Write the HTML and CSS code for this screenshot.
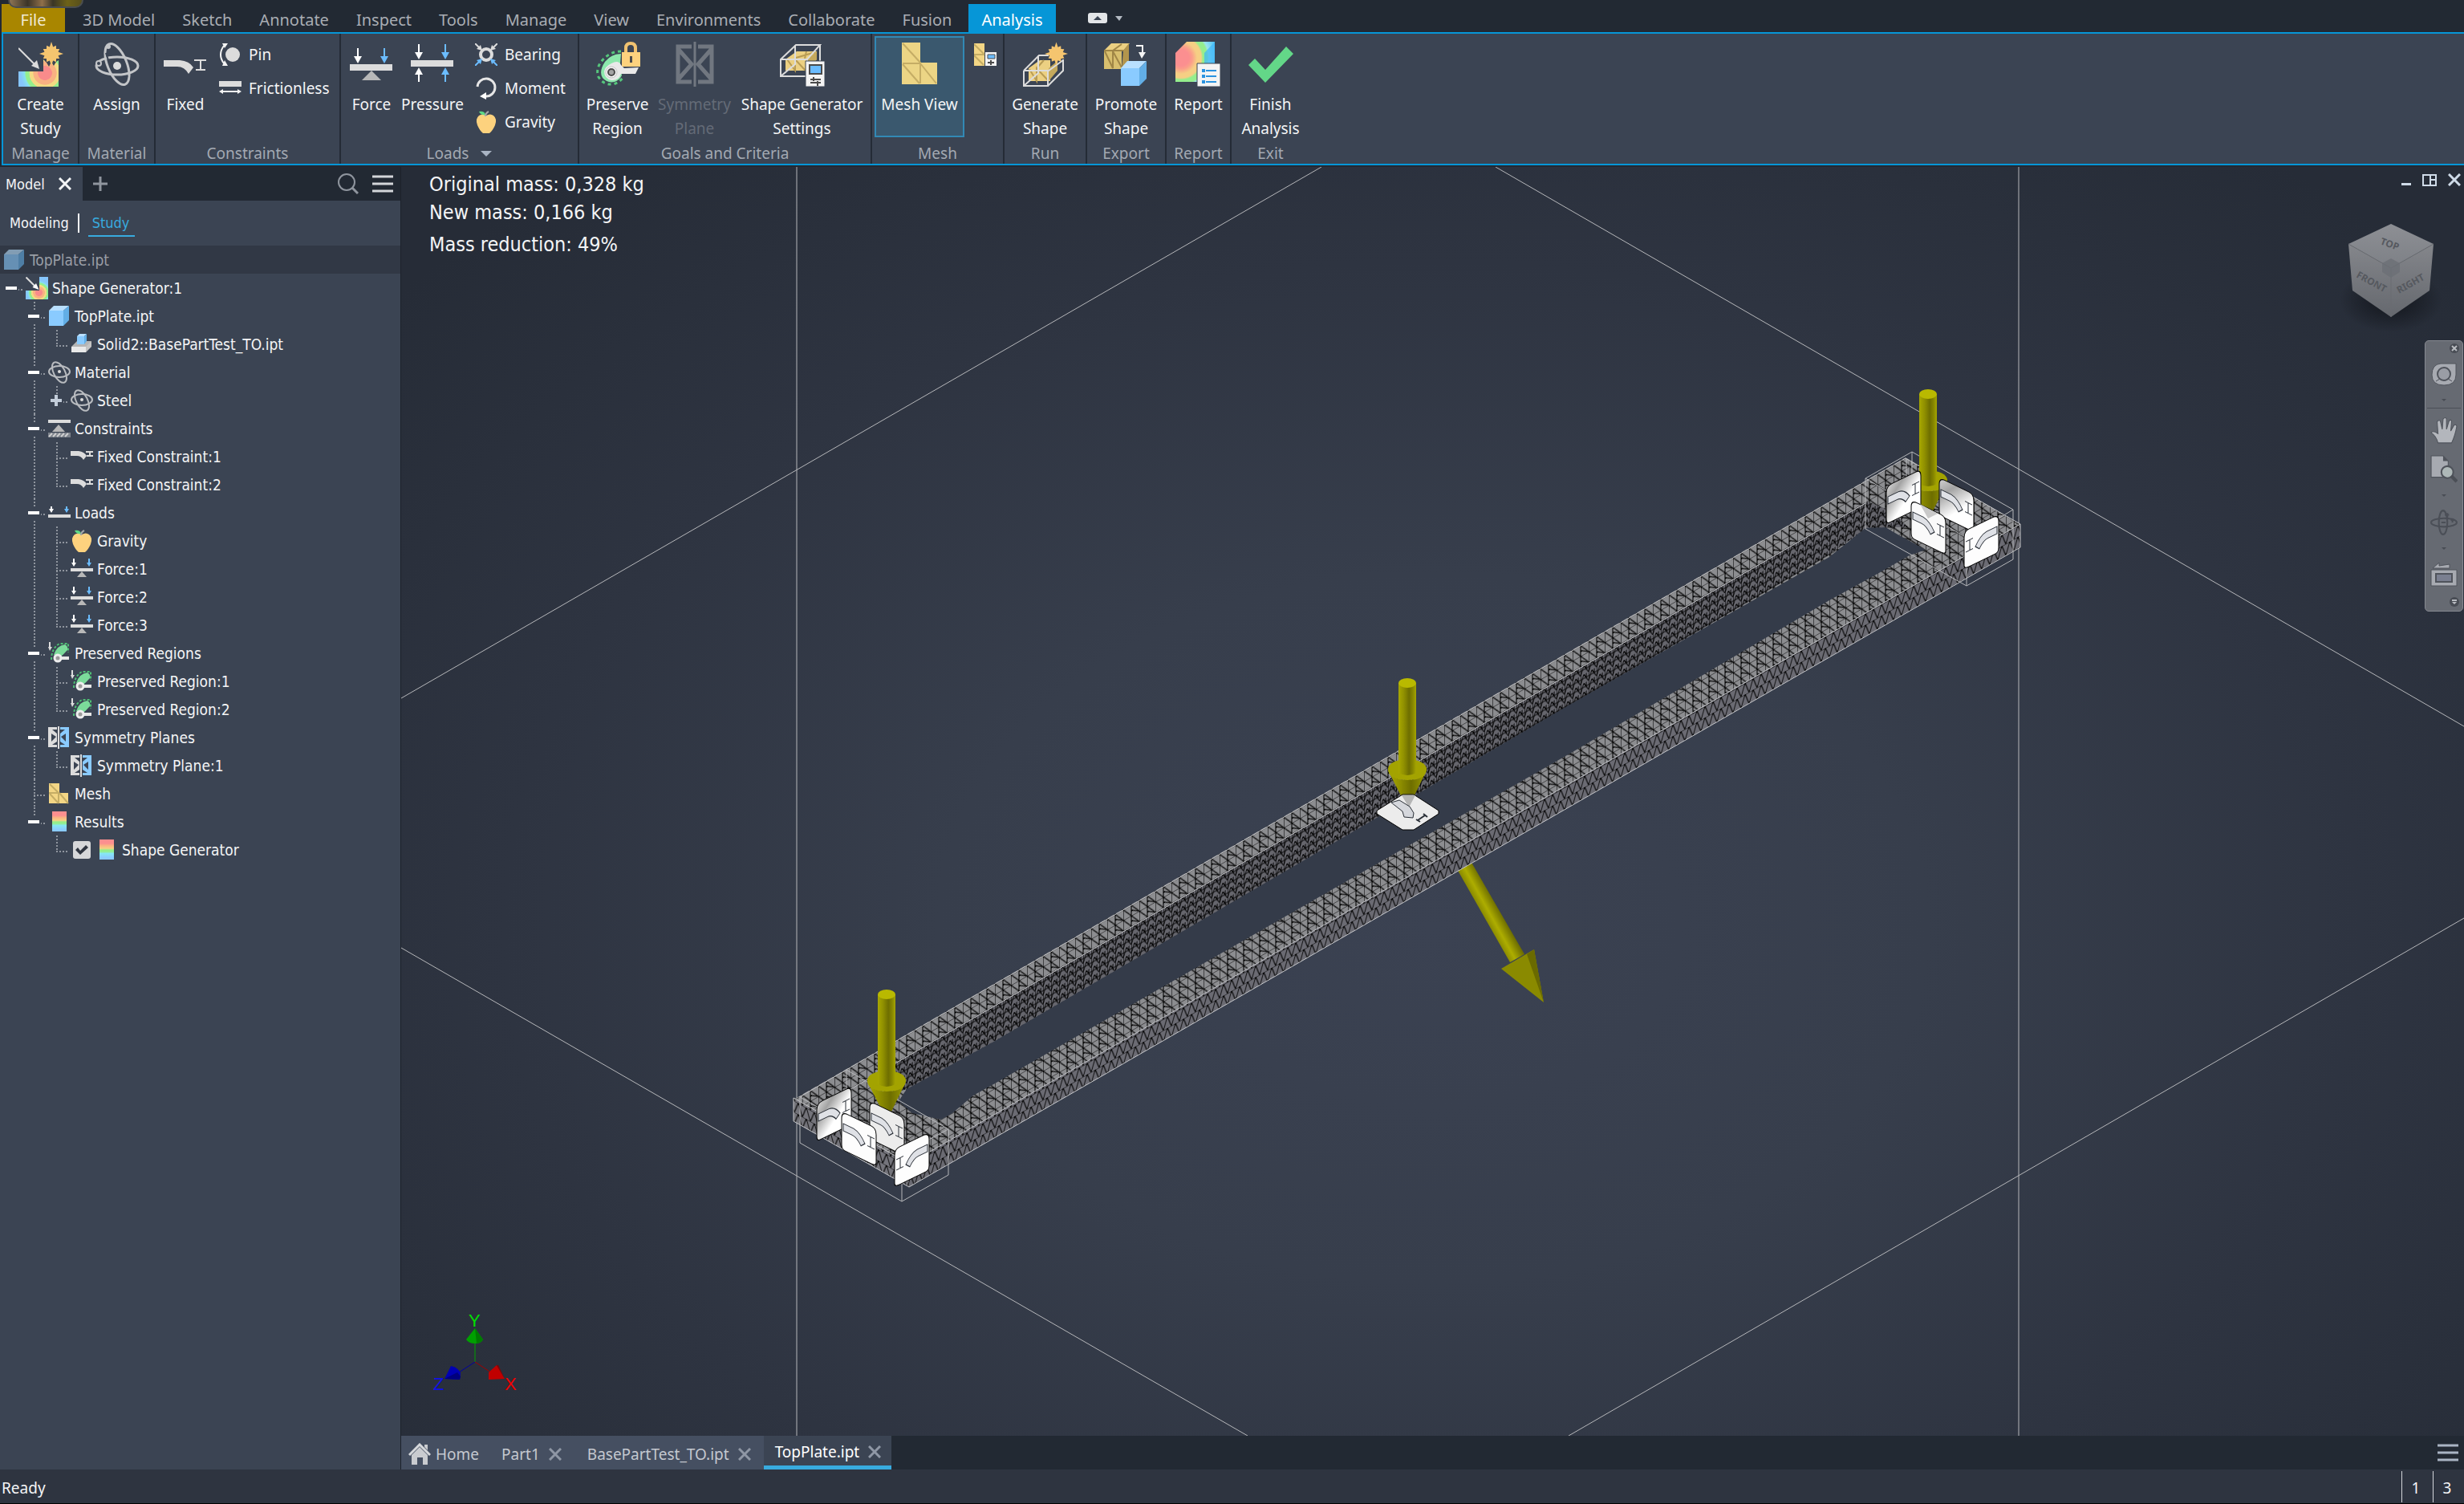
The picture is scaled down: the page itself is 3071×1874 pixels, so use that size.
FILE: index.html
```html
<!DOCTYPE html>
<html lang="en">
<head>
    <meta charset="UTF-8">
    <meta name="viewport" content="width=device-width, initial-scale=1.0">
    <title>TopPlate.ipt - Shape Generator</title>
    <link rel="stylesheet" href="styles.css">
</head>
<body>
    <!-- Icon sprite -->
    <svg class="sprite" aria-hidden="true">
        <defs>
            <radialGradient id="heat" gradientUnits="userSpaceOnUse" cx="33" cy="39" r="34">
                <stop offset="0.25" stop-color="#f98b8b"/>
                <stop offset="0.27" stop-color="#f9b182"/>
                <stop offset="0.42" stop-color="#f9b182"/>
                <stop offset="0.44" stop-color="#f3da83"/>
                <stop offset="0.56" stop-color="#f3da83"/>
                <stop offset="0.58" stop-color="#95ee8d"/>
                <stop offset="0.7" stop-color="#95ee8d"/>
                <stop offset="0.74" stop-color="#86e0ee"/>
                <stop offset="0.9" stop-color="#86c5fb"/>
            </radialGradient>
            <radialGradient id="heatReport" gradientUnits="userSpaceOnUse" cx="7" cy="20" r="50">
                <stop offset="0.2" stop-color="#fb8f90"/>
                <stop offset="0.28" stop-color="#fb9f8a"/>
                <stop offset="0.4" stop-color="#f6cf84"/>
                <stop offset="0.5" stop-color="#f6cf84"/>
                <stop offset="0.55" stop-color="#95ee8d"/>
                <stop offset="0.65" stop-color="#95ee8d"/>
                <stop offset="0.7" stop-color="#9be4ee"/>
                <stop offset="0.95" stop-color="#45bdf8"/>
            </radialGradient>
            <linearGradient id="rainbow" x1="0" y1="0" x2="0" y2="1">
                <stop offset="0.2" stop-color="#fc8f8f"/>
                <stop offset="0.3" stop-color="#fab183"/>
                <stop offset="0.45" stop-color="#f6d183"/>
                <stop offset="0.52" stop-color="#94ee8c"/>
                <stop offset="0.6" stop-color="#94ee8c"/>
                <stop offset="0.7" stop-color="#86e7f4"/>
                <stop offset="0.9" stop-color="#8acbff"/>
            </linearGradient>
        </defs>
        <symbol id="i-star" viewBox="-14 -14 28 28">
            <path fill="#f5c56f" d="M0-14 2-8 5.500-9.500 5.700-5.700 9.500-5.500 8-2 14 0 8 2 9.500 5.500 5.700 5.700 5.500 9.500 2 8 0 14-2 8-5.500 9.500-5.700 5.700-9.500 5.500-8 2-14 0-8-2-9.500-5.500-5.700-5.700-5.500-9.500-2-8z"/>
        </symbol>
        <symbol id="i-create" viewBox="0 0 56 56">
            <path fill="url(#heat)" d="M0 37h31V22l4 4 3 5 3-6 3 5 3-5 3-2v33H0z"/>
            <path stroke="#dcdcdc" stroke-width="2" d="M0 8l21 21"/>
            <path fill="#dcdcdc" d="M26 34l-10-4 7-7z"/>
            <use href="#i-star" x="26" y="0" width="30" height="30"/>
        </symbol>
        <symbol id="i-atom" viewBox="0 0 56 56">
            <g fill="none" stroke="#c3c5c8" stroke-width="3">
                <ellipse cx="28" cy="30" rx="26" ry="11"/>
                <ellipse cx="28" cy="28" rx="12" ry="27" transform="rotate(-22 28 28)"/>
            </g>
            <path stroke="#3b4453" stroke-width="2" d="M14 14q2 8 6 14M33 47q6-1 8-4" fill="none"/>
            <circle cx="28" cy="30" r="5" fill="#dcdcdc"/>
            <circle cx="5" cy="27" r="3" fill="#3b4453" stroke="#c3c5c8" stroke-width="2"/>
            <circle cx="17" cy="6" r="3" fill="#c3c5c8"/>
        </symbol>
        <symbol id="i-atom-small" viewBox="0 0 28 28">
            <g fill="none" stroke="#b9bcc0" stroke-width="2">
                <ellipse cx="14" cy="13" rx="13" ry="7"/>
                <ellipse cx="14" cy="14" rx="7" ry="14" transform="rotate(-28 14 14)"/>
            </g>
            <circle cx="14" cy="13" r="2" fill="#dcdcdc"/>
        </symbol>
        <symbol id="i-fixed" viewBox="0 0 56 56">
            <path fill="#dcdcdc" d="M1 23h20q12 1 17 9l-6 8q-5-9-14-9H1z"/>
            <path fill="none" stroke="#dcdcdc" stroke-width="2" d="M39 23h15M47 23v12M41 35h12"/>
        </symbol>
        <symbol id="i-fixed-small" viewBox="0 0 28 28">
            <path fill="#dcdcdc" d="M0 7h10q7 1 10 6l-4 5q-3-5-8-5H0z"/>
            <path fill="none" stroke="#dcdcdc" stroke-width="2" d="M19 8h9M24 8v5M20 13h8"/>
        </symbol>
        <symbol id="i-pin" viewBox="0 0 28 28">
            <circle cx="17" cy="14" r="9" fill="#dcdcdc"/>
            <path fill="none" stroke="#f4f4f4" stroke-width="2" d="M6 3q-8 11 0 22"/>
            <path fill="#f4f4f4" d="M4 0h7L7 6zM4 28h7l-4-7z"/>
        </symbol>
        <symbol id="i-frictionless" viewBox="0 0 28 28">
            <path fill="#dcdcdc" d="M0 5h28v7H0z"/>
            <path stroke="#f4f4f4" stroke-width="2" d="M3 18h22"/>
            <path fill="#f4f4f4" d="M0 18l5-3v6zM28 18l-5-3v6z"/>
        </symbol>
        <symbol id="i-force" viewBox="0 0 56 56">
            <path fill="#dcdcdc" d="M1 28h53v8H1z"/>
            <path fill="#b8b8b8" d="M28 36l12 12H16z"/>
            <path stroke="#fff" stroke-width="2" d="M11 8v12"/>
            <path fill="#fff" d="M6 18h10l-5 9z"/>
            <path stroke="#6bbcff" stroke-width="2" d="M44 8v12"/>
            <path fill="#6bbcff" d="M39 18h10l-5 9z"/>
        </symbol>
        <symbol id="i-force-small" viewBox="0 0 28 28">
            <path fill="#dcdcdc" d="M0 13h28v4H0z"/>
            <path fill="#b8b8b8" d="M14 17l6 7H8z"/>
            <path fill="#fff" d="M3 1h2v5h2l-3 5-3-5h2z"/>
            <path fill="#6bbcff" d="M22 1h2v5h2l-3 5-3-5h2z"/>
        </symbol>
        <symbol id="i-loads" viewBox="0 0 28 28">
            <path fill="#dcdcdc" d="M0 16h28v4H0z"/>
            <path fill="#fff" d="M3 6h2v3h2l-3 5-3-5h2z"/>
            <path fill="#6bbcff" d="M22 6h2v3h2l-3 5-3-5h2z"/>
        </symbol>
        <symbol id="i-pressure" viewBox="0 0 56 56">
            <path fill="#dcdcdc" d="M1 23h53v8H1z"/>
            <path stroke="#fff" stroke-width="2" d="M11 3v12M11 39v11"/>
            <path fill="#fff" d="M6 13h10l-5 9zM6 41h10l-5-9z"/>
            <path stroke="#6bbcff" stroke-width="2" d="M44 3v12M44 39v11"/>
            <path fill="#6bbcff" d="M39 13h10l-5 9zM39 41h10l-5-9z"/>
        </symbol>
        <symbol id="i-bearing" viewBox="0 0 28 28">
            <circle cx="14" cy="14" r="7" fill="none" stroke="#dcdcdc" stroke-width="4"/>
            <path stroke="#dcdcdc" stroke-width="2" d="M0 0l5 5M28 0l-5 5"/>
            <path fill="#dcdcdc" d="M9 9l-7-2 5-5zM19 9l7-2-5-5z"/>
            <path stroke="#6bbcff" stroke-width="2" d="M0 28l5-5M28 28l-5-5"/>
            <path fill="#6bbcff" d="M9 19l-7 2 5 5zM19 19l7 2-5 5z"/>
        </symbol>
        <symbol id="i-moment" viewBox="0 0 28 28">
            <path fill="none" stroke="#e6e6e6" stroke-width="3" d="M3 12A11 11 0 1 1 14 24"/>
            <path fill="#fff" d="M6 24l8-5v9z"/>
        </symbol>
        <symbol id="i-apple" viewBox="0 0 28 28">
            <path fill="#fdd27e" d="M14 6q5-3 9 0 5 4 2 12-3 7-7 10h-8q-4-3-7-10-3-8 2-12 4-3 9 0z"/>
            <path fill="#5fd886" d="M5 1q7-1 8 4-6 1-8-4z"/>
            <path fill="none" stroke="#a5a7aa" stroke-width="2" d="M13 7q0-4 4-6"/>
        </symbol>
        <symbol id="i-preserve" viewBox="0 0 56 56">
            <path fill="none" stroke="#55c77c" stroke-width="3" stroke-dasharray="4 4" d="M32 12Q18 12 8 24 0 34 4 44q6 10 18 9 8-2 13-9"/>
            <path fill="#8ce8ac" d="M32 15q-12 0-20 10-8 12-3 20 6 7 15 5 6-2 9-8l-2-15z"/>
            <path fill="#e9e9e9" d="M20 27q9-5 12 2l4 4 18-1-4 8H32q-3 9-12 8-9-2-9-11 1-6 9-10z"/>
            <circle cx="20" cy="38" r="7" fill="#f4f4f4" stroke="#c4c4c4"/>
            <circle cx="20" cy="38" r="4" fill="#a3a3a3" stroke="#4b4b4b" stroke-width="2"/>
            <path fill="none" stroke="#f1c270" stroke-width="4" d="M38 14V8q0-6 6-6t6 6v6"/>
            <path fill="#fdd27e" d="M33 13h23v18H33z"/>
            <path fill="#4b4b4b" d="M43 18h3v8h-3z"/>
        </symbol>
        <symbol id="i-preserved" viewBox="0 0 28 28">
            <path fill="#7bdb9a" d="M7 16q4-12 14-13 4 2 3 7-5 6-11 10z"/>
            <path fill="none" stroke="#4fbf75" stroke-width="2" stroke-dasharray="3 2" d="M4 22Q4 8 14 2h11v11"/>
            <path fill="#e6e6e6" d="M12 18h14v4H12z"/>
            <circle cx="12" cy="20" r="4" fill="#9a9a9a" stroke="#eee" stroke-width="3"/>
            <path fill="#dcdcdc" d="M1 0h2v6h2l-3 5-2-5h1z"/>
        </symbol>
        <symbol id="i-symmetry-off" viewBox="0 0 56 56">
            <g fill="none" stroke="#717780" stroke-width="5">
                <path d="M24 6H7v44h17M8 10l16 18L8 46M32 6h17v44H32M48 10L32 28l16 18"/>
            </g>
            <path stroke="#717780" stroke-width="3" d="M28 0v56"/>
        </symbol>
        <symbol id="i-symmetry" viewBox="0 0 28 28">
            <path fill="#dcdcdc" d="M0 1h11v25H0z"/>
            <path fill="#8acbff" d="M15 1h11v25H15z"/>
            <path fill="#3b4453" d="M4 9l6 4-6 6zM5 4h6v5zM5 23h6v-4zM22 9l-6 4 6 6zM21 4h-6v5zM21 23h-6v-4z"/>
            <path stroke="#3b4453" stroke-width="4" d="M13 0v28"/>
            <path stroke="#dcdcdc" stroke-width="2" d="M13 0v28"/>
        </symbol>
        <symbol id="i-settings" viewBox="0 0 56 56">
            <path fill="#ecd082" d="M7 22l14-10h25v10L32 36H7z"/>
            <path fill="#c5a95c" d="M33 22l13-10v10L33 36z"/>
            <path fill="none" stroke="#b89c55" stroke-width="2" d="M9 22l10 14V22l13 14M20 20l24-7M33 12l-2 9"/>
            <path fill="none" stroke="#dcdcdc" stroke-width="2" d="M1 22L20 4h30L34 22zM1 22v21h33V22M1 43l18-15V4M50 4v20"/>
            <path fill="#f4f4f4" stroke="#3b4453" d="M32 24h24v32H32z"/>
            <path fill="#6bbcff" stroke="#4b4b4b" stroke-width="2" d="M37 29h15v11H37z"/>
            <path stroke="#4b4b4b" stroke-width="2" d="M38 47h13M38 51h13M42 44v5M47 49v6"/>
        </symbol>
        <symbol id="i-mesh" viewBox="0 0 56 56">
            <path fill="#ecd585" d="M6 1h23v25h21v27H6z"/>
            <path fill="none" stroke="#c5ad65" stroke-width="2" d="M7 2l22 24v26M7 27h22M7 28l21 24M29 27l20 25"/>
        </symbol>
        <symbol id="i-mesh-small" viewBox="0 0 28 28">
            <path fill="#f3d685" d="M1 1h13v12h11v13H1z"/>
            <path fill="none" stroke="#c5ad65" stroke-width="2" d="M2 2l11 11v13M1 13h12M2 14l11 12M14 13l11 13"/>
        </symbol>
        <symbol id="i-mesh-settings" viewBox="0 0 28 28">
            <path fill="#f3d685" d="M0 0h13v28H0z"/>
            <path fill="none" stroke="#c5ad65" stroke-width="2" d="M0 1l13 13M0 14h13M0 15l12 12"/>
            <path fill="#f4f4f4" d="M14 11h14v17H14z"/>
            <path fill="#6bbcff" stroke="#4b4b4b" d="M17 14h9v5h-9z"/>
            <path stroke="#4b4b4b" stroke-width="2" d="M17 24h8M21 21v6"/>
        </symbol>
        <symbol id="i-generate" viewBox="0 0 56 56">
            <path fill="#ecd082" d="M7 33l14-10h13v26H7z"/>
            <path fill="#c5a95c" d="M32 33l11-9v12L32 49z"/>
            <path fill="none" stroke="#b89c55" stroke-width="2" d="M8 34l9 15V33l14 15M18 32l8-9"/>
            <path fill="none" stroke="#dcdcdc" stroke-width="2" d="M1 36l19-19h12M1 36h31l18-13M1 36v19h30V36M31 55l19-19V22M1 55l18-16V17"/>
            <use href="#i-star" x="27" y="0" width="29" height="30"/>
        </symbol>
        <symbol id="i-promote" viewBox="0 0 56 56">
            <path fill="#d8bf6e" d="M1 11h22v23H1z"/>
            <path fill="#ecd082" d="M1 11l9-9h23l-8 9z"/>
            <path fill="#b3954c" d="M25 11l7-9v22l-9 10z"/>
            <path fill="none" stroke="#a08646" stroke-width="2" d="M2 12l10 21V12l11 20M1 11h24M12 11l11-8"/>
            <path fill="#8acbff" d="M22 33h23v22H22z"/>
            <path fill="#b9e0ff" d="M22 33l8-9h24l-9 9z"/>
            <path fill="#62aee6" d="M45 33l9-9v22l-9 9z"/>
            <path fill="none" stroke="#f4f4f4" stroke-width="2" d="M41 5h8v10"/>
            <path fill="#f4f4f4" d="M44 13h9l-5 8z"/>
        </symbol>
        <symbol id="i-report" viewBox="0 0 56 56">
            <path fill="url(#heatReport)" d="M0 14L14 0h35v36L36 50H0z"/>
            <path fill="#3fb6fa" d="M36 14L49 0v36L36 50z" opacity=".7"/>
            <path fill="#f4f4f4" stroke="#3b4453" d="M27 27h29v29H27z"/>
            <path stroke="#2a93e0" stroke-width="2" d="M38 36h13M38 43h13M38 50h13"/>
            <path fill="#2a93e0" d="M33 34h4v4h-4zM33 41h4v4h-4zM33 48h4v4h-4z"/>
        </symbol>
        <symbol id="i-finish" viewBox="0 0 56 56">
            <path fill="#63d788" d="M0 29l8-8 13 14L47 6l9 9-35 36z"/>
        </symbol>
        <symbol id="i-cube" viewBox="0 0 28 28">
            <path fill="#8acbff" d="M1 7h18v19H1z"/>
            <path fill="#b9e0ff" d="M1 7l6-6h19l-7 6z"/>
            <path fill="#62aee6" d="M19 7l7-6v18l-7 7z"/>
        </symbol>
        <symbol id="i-solid" viewBox="0 0 28 28">
            <path fill="#b5b5b5" d="M1 17l7-7h18l-7 14z"/>
            <path fill="#e9e9e9" d="M1 17h18v7H1z"/>
            <path fill="#c4c4c4" d="M19 17l7-7v7l-7 7z"/>
            <path fill="#8acbff" d="M8 4h9v10H8z"/>
            <path fill="#b9e0ff" d="M8 4l3-3h9l-3 3z"/>
            <path fill="#62aee6" d="M17 4l3-3v9l-3 4z"/>
        </symbol>
        <symbol id="i-constraints" viewBox="0 0 28 28">
            <path fill="#dcdcdc" d="M0 3h28v4H0z"/>
            <path fill="#b8b8b8" d="M13 9l8 9H5z"/>
            <path fill="#7d838c" d="M0 19h28v6H0z"/>
            <path stroke="#cfcfcf" stroke-width="2" d="M1 24l4-4M6 24l4-4M11 24l4-4M16 24l4-4M21 24l4-4"/>
        </symbol>
        <symbol id="i-results" viewBox="0 0 28 28">
            <path fill="url(#rainbow)" d="M5 1h18v25H5z"/>
        </symbol>
        <symbol id="i-shape" viewBox="0 0 56 56">
            <path fill="url(#heat)" d="M0 34h34V0h22v56H0z"/>
            <path stroke="#dcdcdc" stroke-width="4" d="M1 1l24 24"/>
            <path fill="#fff" d="M33 32l-16-6 9-10z"/>
        </symbol>
        <symbol id="i-close" viewBox="0 0 16 16">
            <path fill="none" stroke="currentColor" stroke-width="3" d="M1 1l14 14M15 1L1 15"/>
        </symbol>
        <symbol id="i-menu" viewBox="0 0 26 22">
            <path stroke="currentColor" stroke-width="3" d="M0 2h26M0 11h26M0 20h26"/>
        </symbol>
    </svg>

    <header class="ribbon">
        <div class="camera-thumb"></div>
        <nav class="ribbon-tabs">
            <button class="tab file">File</button>
            <button class="tab">3D Model</button>
            <button class="tab">Sketch</button>
            <button class="tab">Annotate</button>
            <button class="tab">Inspect</button>
            <button class="tab">Tools</button>
            <button class="tab">Manage</button>
            <button class="tab">View</button>
            <button class="tab">Environments</button>
            <button class="tab">Collaborate</button>
            <button class="tab">Fusion</button>
            <button class="tab active">Analysis</button>
            <button class="tab-options" aria-label="Ribbon options">
                <svg width="44" height="14" viewBox="0 0 44 14">
                    <rect width="24" height="13" rx="3" fill="#e3e5e8"/>
                    <path fill="#3b4453" d="M12 4l5 5H7z"/>
                    <path fill="#b4bac3" d="M34 4h9l-4 6z"/>
                </svg>
            </button>
        </nav>

        <div class="ribbon-groups">
            <section class="group manage">
                <div class="tools">
                    <button class="tool"><svg class="icon"><use href="#i-create"/></svg><span>Create<br>Study</span></button>
                </div>
                <h2>Manage</h2>
            </section>
            <section class="group material">
                <div class="tools">
                    <button class="tool"><svg class="icon"><use href="#i-atom"/></svg><span>Assign</span></button>
                </div>
                <h2>Material</h2>
            </section>
            <section class="group constraints">
                <div class="tools">
                    <button class="tool fixed"><svg class="icon"><use href="#i-fixed"/></svg><span>Fixed</span></button>
                    <div class="stack">
                        <button><svg class="icon-small"><use href="#i-pin"/></svg>Pin</button>
                        <button><svg class="icon-small"><use href="#i-frictionless"/></svg>Frictionless</button>
                    </div>
                </div>
                <h2>Constraints</h2>
            </section>
            <section class="group loads">
                <div class="tools">
                    <button class="tool force"><svg class="icon"><use href="#i-force"/></svg><span>Force</span></button>
                    <button class="tool pressure"><svg class="icon"><use href="#i-pressure"/></svg><span>Pressure</span></button>
                    <div class="stack">
                        <button><svg class="icon-small"><use href="#i-bearing"/></svg>Bearing</button>
                        <button><svg class="icon-small"><use href="#i-moment"/></svg>Moment</button>
                        <button><svg class="icon-small"><use href="#i-apple"/></svg>Gravity</button>
                    </div>
                </div>
                <h2>Loads <span class="caret"></span></h2>
            </section>
            <section class="group goals">
                <div class="tools">
                    <button class="tool preserve"><svg class="icon"><use href="#i-preserve"/></svg><span>Preserve<br>Region</span></button>
                    <button class="tool symmetry" disabled><svg class="icon"><use href="#i-symmetry-off"/></svg><span>Symmetry<br>Plane</span></button>
                    <button class="tool settings"><svg class="icon"><use href="#i-settings"/></svg><span>Shape Generator<br>Settings</span></button>
                </div>
                <h2>Goals and Criteria</h2>
            </section>
            <section class="group mesh">
                <div class="tools">
                    <button class="tool selected"><svg class="icon"><use href="#i-mesh"/></svg><span>Mesh View</span></button>
                    <div class="stack">
                        <button aria-label="Mesh settings"><svg class="icon-small"><use href="#i-mesh-settings"/></svg></button>
                    </div>
                </div>
                <h2>Mesh</h2>
            </section>
            <section class="group run">
                <div class="tools">
                    <button class="tool"><svg class="icon"><use href="#i-generate"/></svg><span>Generate<br>Shape</span></button>
                </div>
                <h2>Run</h2>
            </section>
            <section class="group export">
                <div class="tools">
                    <button class="tool"><svg class="icon"><use href="#i-promote"/></svg><span>Promote<br>Shape</span></button>
                </div>
                <h2>Export</h2>
            </section>
            <section class="group report">
                <div class="tools">
                    <button class="tool"><svg class="icon"><use href="#i-report"/></svg><span>Report</span></button>
                </div>
                <h2>Report</h2>
            </section>
            <section class="group exit">
                <div class="tools">
                    <button class="tool"><svg class="icon"><use href="#i-finish"/></svg><span>Finish<br>Analysis</span></button>
                </div>
                <h2>Exit</h2>
            </section>
        </div>
    </header>

    <div class="workspace">
        <aside class="browser">
            <div class="browser-tabs">
                <button class="browser-tab">Model <svg class="x"><use href="#i-close"/></svg></button>
                <button class="add" aria-label="Add panel"><svg width="18" height="18" viewBox="0 0 18 18"><path stroke="#8f959e" stroke-width="3" d="M9 0v18M0 9h18"/></svg></button>
                <button class="search" aria-label="Search"><svg width="26" height="26" viewBox="0 0 26 26"><circle cx="11" cy="11" r="10" fill="none" stroke="#8f959e" stroke-width="2"/><path stroke="#8f959e" stroke-width="3" d="M18 18l7 7"/></svg></button>
                <button class="menu" aria-label="Menu"><svg width="26" height="22"><use href="#i-menu"/></svg></button>
            </div>
            <div class="modes">
                <a href="#">Modeling</a>
                <a href="#" class="current"><span>Study</span></a>
            </div>
            <div class="root"><svg class="icon-small"><use href="#i-cube"/></svg>TopPlate.ipt</div>
            <ul class="tree">
                <li>
                    <div class="row"><span class="stub"><button class="toggle" aria-label="Collapse"></button></span><svg class="icon-small"><use href="#i-shape"/></svg>Shape Generator:1</div>
                    <ul>
                        <li>
                            <div class="row"><span class="stub"><button class="toggle" aria-label="Collapse"></button></span><svg class="icon-small"><use href="#i-cube"/></svg>TopPlate.ipt</div>
                            <ul>
                                <li><div class="row"><span class="stub"></span><svg class="icon-small"><use href="#i-solid"/></svg>Solid2::BasePartTest_TO.ipt</div></li>
                            </ul>
                        </li>
                        <li>
                            <div class="row"><span class="stub"><button class="toggle" aria-label="Collapse"></button></span><svg class="icon-small"><use href="#i-atom-small"/></svg>Material</div>
                            <ul>
                                <li><div class="row"><span class="stub"><button class="toggle plus" aria-label="Expand"></button></span><svg class="icon-small"><use href="#i-atom-small"/></svg>Steel</div></li>
                            </ul>
                        </li>
                        <li>
                            <div class="row"><span class="stub"><button class="toggle" aria-label="Collapse"></button></span><svg class="icon-small"><use href="#i-constraints"/></svg>Constraints</div>
                            <ul>
                                <li><div class="row"><span class="stub"></span><svg class="icon-small"><use href="#i-fixed-small"/></svg>Fixed Constraint:1</div></li>
                                <li><div class="row"><span class="stub"></span><svg class="icon-small"><use href="#i-fixed-small"/></svg>Fixed Constraint:2</div></li>
                            </ul>
                        </li>
                        <li>
                            <div class="row"><span class="stub"><button class="toggle" aria-label="Collapse"></button></span><svg class="icon-small"><use href="#i-loads"/></svg>Loads</div>
                            <ul>
                                <li><div class="row"><span class="stub"></span><svg class="icon-small"><use href="#i-apple"/></svg>Gravity</div></li>
                                <li><div class="row"><span class="stub"></span><svg class="icon-small"><use href="#i-force-small"/></svg>Force:1</div></li>
                                <li><div class="row"><span class="stub"></span><svg class="icon-small"><use href="#i-force-small"/></svg>Force:2</div></li>
                                <li><div class="row"><span class="stub"></span><svg class="icon-small"><use href="#i-force-small"/></svg>Force:3</div></li>
                            </ul>
                        </li>
                        <li>
                            <div class="row"><span class="stub"><button class="toggle" aria-label="Collapse"></button></span><svg class="icon-small"><use href="#i-preserved"/></svg>Preserved Regions</div>
                            <ul>
                                <li><div class="row"><span class="stub"></span><svg class="icon-small"><use href="#i-preserved"/></svg>Preserved Region:1</div></li>
                                <li><div class="row"><span class="stub"></span><svg class="icon-small"><use href="#i-preserved"/></svg>Preserved Region:2</div></li>
                            </ul>
                        </li>
                        <li>
                            <div class="row"><span class="stub"><button class="toggle" aria-label="Collapse"></button></span><svg class="icon-small"><use href="#i-symmetry"/></svg>Symmetry Planes</div>
                            <ul>
                                <li><div class="row"><span class="stub"></span><svg class="icon-small"><use href="#i-symmetry"/></svg>Symmetry Plane:1</div></li>
                            </ul>
                        </li>
                        <li><div class="row"><span class="stub"></span><svg class="icon-small"><use href="#i-mesh-small"/></svg>Mesh</div></li>
                        <li>
                            <div class="row"><span class="stub"><button class="toggle" aria-label="Collapse"></button></span><svg class="icon-small"><use href="#i-results"/></svg>Results</div>
                            <ul>
                                <li><div class="row"><span class="stub"></span><input type="checkbox" id="showResult" checked><label for="showResult"><svg class="icon-small"><use href="#i-results"/></svg>Shape Generator</label></div></li>
                            </ul>
                        </li>
                    </ul>
                </li>
            </ul>
        </aside>

        <main class="document">
            <div class="viewport">
                <svg class="scene" viewBox="500 208 2571 1581" preserveAspectRatio="xMidYMid slice">
                    <defs>
                        <pattern id="meshTop" width="20" height="13" patternUnits="userSpaceOnUse" patternTransform="translate(0 1942) skewY(-30)">
                            <rect width="20" height="13" fill="#8c8d90"/>
                            <path fill="none" stroke="#000" d="M0 0h20M0 0v13M10 0v13M0 0l10 13M10 0l10 13M10 6l10 7"/>
                        </pattern>
                        <pattern id="meshSide" width="10" height="14" patternUnits="userSpaceOnUse" patternTransform="translate(0 2107) skewY(-30)">
                            <rect width="10" height="14" fill="#6b6b73"/>
                            <path fill="none" stroke="#000" d="M0 14L5 0l5 14M0 0h10"/>
                        </pattern>
                        <pattern id="meshInner" width="10" height="11" patternUnits="userSpaceOnUse" patternTransform="translate(0 1969) skewY(-30)">
                            <rect width="10" height="11" fill="#66666d"/>
                            <path fill="none" stroke="#000" d="M0 11L4 0l6 11M0 0v11M0 5h10M7 0v7"/>
                        </pattern>
                        <pattern id="meshEnd" width="10" height="14" patternUnits="userSpaceOnUse" patternTransform="translate(0 800) skewY(30)">
                            <rect width="10" height="14" fill="#74747b"/>
                            <path fill="none" stroke="#000" d="M0 14L5 0l5 14M0 0h10"/>
                        </pattern>
                        <linearGradient id="shaft" x1="0" x2="1" y1="0" y2="0">
                            <stop offset="0" stop-color="#a8a800"/>
                            <stop offset="0.3" stop-color="#909000"/>
                            <stop offset="0.6" stop-color="#6e6e00"/>
                            <stop offset="0.8" stop-color="#858500"/>
                            <stop offset="1" stop-color="#a5a500"/>
                        </linearGradient>
                        <linearGradient id="shaftSlant" gradientUnits="userSpaceOnUse" x1="1850" y1="1143" x2="1868" y2="1133">
                            <stop offset="0" stop-color="#8a8a00"/>
                            <stop offset="0.4" stop-color="#adad00"/>
                            <stop offset="1" stop-color="#6e6e00"/>
                        </linearGradient>
                        <linearGradient id="cardShade" x1="0" y1="0" x2="1" y2="1">
                            <stop offset="0" stop-color="#d6d6d6"/>
                            <stop offset="0.25" stop-color="#a3a3a3"/>
                            <stop offset="0.6" stop-color="#fff"/>
                        </linearGradient>
                        <linearGradient id="cubeTop" x1="0" y1="0" x2="0" y2="1">
                            <stop offset="0" stop-color="#8d8f94"/>
                            <stop offset="1" stop-color="#7d8086"/>
                        </linearGradient>
                        <linearGradient id="cubeSide" x1="0" y1="0" x2="0" y2="1">
                            <stop offset="0" stop-color="#84868b"/>
                            <stop offset="1" stop-color="#65686e"/>
                        </linearGradient>
                        <radialGradient id="cubeShadow">
                            <stop offset="0" stop-color="#12151b"/>
                            <stop offset="1" stop-color="#12151b" stop-opacity="0"/>
                        </radialGradient>
                        <g id="arrow">
                            <ellipse cx="0" cy="107" rx="24" ry="12" fill="#a3a300"/>
                            <path fill="url(#shaft)" d="M-24 109Q-20 121 0 121T24 109L3 152H-2z"/>
                            <path fill="#a3a300" d="M-24 107Q-24 121 0 121T24 107Q20 114 0 114T-24 107z"/>
                            <path fill="url(#shaft)" d="M-11 0V112Q0 118 11 112V0z"/>
                            <ellipse rx="11" ry="6" fill="#b9b900"/>
                        </g>
                        <g id="cardBody">
                            <path stroke="#000" d="M8 0h29q6 0 6 8v35q0 4-6 4H4q-4 0-4-6V8q0-8 8-8z"/>
                        </g>
                        <g id="cardGlyph">
                            <path fill="#dfe1e6" stroke="#2b3038" d="M2 14h13q8 1 14 12l-5 5q-5-8-11-8H2z"/>
                            <path fill="none" stroke="#2b3038" d="M32 14h9M36 14v13M32 27h9"/>
                        </g>
                    </defs>

                    <!-- Bounding planes -->
                    <path class="wire" d="M993 208V1789M2516 208V1789M500 870L1647 208M1864 208L3071 905M500 1181L1555 1789M1955 1789L3071 1144"/>

                    <!-- Force through the lower bar -->
                    <path fill="url(#shaftSlant)" d="M1812 1076l17-10 71 123-18 10z"/>
                    <path fill="#8a8a00" d="M1871 1207l41-24 12 66z"/>
                    <path fill="#6a6a00" d="M1903 1189l9-6 12 66z"/>

                    <!-- Meshed plate -->
                    <path fill="url(#meshTop)" d="M989 1370L2375 570l143 83L1133 1450z"/>
                    <path fill="url(#meshEnd)" d="M989 1368l144 82v29l-144-82z"/>
                    <path fill="url(#meshSide)" d="M1133 1450L2518 653v29L1133 1479z"/>
                    <path fill="url(#meshInner)" d="M1100 1334L2328 625l30 12 20 20-28 0-25 2-45 32L1240 1297l-110 60-30 10z"/>
                    <path class="hole" d="M1130 1357l110-60L1680 1040 1960 876 2280 694l45-36 25-1 17 10 33 18-20 7-40 23-60 33L1960 937 1680 1097 1240 1350l-27 15-26 22-14 8-36-8-17-15z"/>
                    <path class="edge" d="M996 1367L2375 571l143 82v29L1133 1479l-144-82v-29l144 82L2518 653M1055 1360L2325 627"/>

                    <!-- Preserved region boxes -->
                    <path class="wire" d="M2325 596l58-33 126 72v62l-58 33-126-71zM2325 596l126 74 58-35M2451 670v60M2383 563v28M2376 571v26"/>
                    <path class="wire" d="M997 1367l58-34 127 74v57l-58 33-127-73zM997 1367l127 71 58-31M1124 1438v59M1055 1333v24"/>

                    <!-- Constraint and force markers -->
                    <use href="#arrow" x="2403" y="491"/>
                    <use href="#arrow" x="1105" y="1239"/>
                    <use href="#arrow" x="1754" y="851"/>

                    <g transform="translate(2351 606) skewY(-26)"><use href="#cardBody" fill="url(#cardShade)"/><use href="#cardGlyph"/></g>
                    <g transform="translate(2417 595) skewY(26)"><use href="#cardBody" fill="url(#cardShade)"/><use href="#cardGlyph"/></g>
                    <g transform="translate(2382 623) skewY(26)"><use href="#cardBody" fill="#fafafa"/><use href="#cardGlyph"/></g>
                    <g transform="translate(2491 641) scale(-1 1) skewY(26)"><use href="#cardBody" fill="#fdfdfd"/><use href="#cardGlyph"/></g>
                    <path fill="#c9c9c9" d="M2393 628l22 12-12 6z"/>

                    <g transform="translate(1018 1375) skewY(-26)"><use href="#cardBody" fill="url(#cardShade)"/><use href="#cardGlyph"/></g>
                    <g transform="translate(1084 1372) skewY(26)"><use href="#cardBody" fill="#ececec"/><use href="#cardGlyph"/></g>
                    <g transform="translate(1049 1385) skewY(26)"><use href="#cardBody" fill="#fdfdfd"/><use href="#cardGlyph"/></g>
                    <g transform="translate(1158 1411) scale(-1 1) skewY(26)"><use href="#cardBody" fill="#fdfdfd"/><use href="#cardGlyph"/></g>

                    <path fill="#ececec" stroke="#000" d="M1716 1010l32-20h14l31 20v4l-31 20h-14l-32-20z"/>
                    <path fill="#b5b5b5" d="M1747 991h17l-8 15z"/>
                    <path fill="#d5d7dc" stroke="#2b3038" d="M1734 1000l10-3 13 8 5 8-1 6-11-1-2-7z"/>
                    <path fill="none" stroke="#2b3038" stroke-width="2" d="M1765 1021l5 3M1774 1014l5 4M1767 1022l9-6"/>

                    <!-- Axis triad -->
                    <g class="triad">
                        <path stroke="#00a000" d="M592 1697v-25"/>
                        <path stroke="#a00000" d="M592 1697l20 13"/>
                        <path stroke="#0000a0" d="M592 1697l-20 13"/>
                        <path fill="#00a000" d="M592 1655l10 14q-2 5-10 5t-11-5z"/>
                        <path fill="#007a00" d="M592 1655l10 14q-2 4-8 5z"/>
                        <path fill="#c00000" d="M629 1718l-20 1v-9l10-9z"/>
                        <path fill="#8a0000" d="M619 1701l2 0 8 17z"/>
                        <path fill="#0000b4" d="M554 1718l8-16q9 2 12 9l-1 8z"/>
                        <path fill="#00007e" d="M554 1718l16-8 4 5-1 4z"/>
                        <text x="584" y="1653" fill="#00e000">Y</text>
                        <text x="629" y="1732" fill="#f00000">X</text>
                        <text x="540" y="1732" fill="#1010e8">Z</text>
                    </g>
                </svg>

                <div class="mass">
                    <p>Original mass: 0,328 kg</p>
                    <p>New mass: 0,166 kg</p>
                    <p class="reduction">Mass reduction: 49%</p>
                </div>

                <div class="window-buttons">
                    <button aria-label="Minimize"><svg width="12" height="16" viewBox="0 0 12 16"><path fill="#cfdbe8" d="M0 12h12v3H0z"/></svg></button>
                    <button aria-label="Tile"><svg width="18" height="16" viewBox="0 0 18 16"><path fill="none" stroke="#cfdbe8" stroke-width="2" d="M1 2h16v13H1zM10 2v13M10 8h7"/></svg></button>
                    <button aria-label="Close"><svg class="x"><use href="#i-close"/></svg></button>
                </div>

                <svg class="view-cube" width="130" height="150" viewBox="2915 268 130 150">
                    <ellipse cx="2980" cy="374" rx="64" ry="40" fill="url(#cubeShadow)"/>
                    <path fill="url(#cubeTop)" d="M2980 279l53 25-53 30-53-30z"/>
                    <path fill="url(#cubeSide)" d="M2927 304l53 30v61l-48-33z"/>
                    <path fill="url(#cubeSide)" d="M3033 304l-53 30v61l48-33z"/>
                    <path fill="none" stroke="#6a6d72" d="M2927 304l53 30 53-30M2980 334v61"/>
                    <path fill="#6b6f76" d="M2969 328l11-6 11 6v11l-11 7-11-7z" opacity=".8"/>
                    <text x="2936" y="345" transform="rotate(29 2936 345)">FRONT</text>
                    <text x="2990" y="366" transform="rotate(-29 2990 366)">RIGHT</text>
                    <text x="2966" y="304" transform="rotate(20 2966 304)">TOP</text>
                </svg>

                <div class="nav-bar">
                    <button class="nav-corner" aria-label="Close"><svg width="12" height="12" viewBox="0 0 12 12"><circle cx="6" cy="6" r="6" fill="#484c54"/><path stroke="#b9bcc1" stroke-width="2" d="M3 3l6 6M9 3L3 9"/></svg></button>
                    <button class="nav-tool wheel" aria-label="Full navigation wheel"><svg width="32" height="32" viewBox="0 0 32 30"><path fill="#a7aab1" stroke="#4f535b" d="M12 1h19v14q0 13-15 13T1 15Q1 2 12 1z"/><circle cx="16" cy="14" r="8" fill="#9a9da5" stroke="#4f535b" stroke-width="2"/><path stroke="#4f535b" d="M6 23l5-3M26 23l-5-3"/></svg><i></i></button>
                    <button class="nav-tool" aria-label="Pan"><svg width="34" height="36" viewBox="0 0 32 32"><path fill="#b3b6bc" stroke="#4f535b" d="M9 30q-2-8-8-12 2-3 8 1L8 5q3-3 4 0l2 9 1-12q3-3 4 0v12l3-10q3-2 3 1l-1 11 4-7q3-1 3 2-2 11-6 19z"/></svg></button>
                    <button class="nav-tool" aria-label="Zoom"><svg width="34" height="36" viewBox="0 0 32 32"><path fill="#a7aab1" stroke="#4f535b" d="M1 1h14l6 6v19H1z"/><path fill="#4f535b" d="M15 1l6 6h-6z"/><circle cx="20" cy="20" r="7" fill="#aeb8b8" stroke="#4f535b" stroke-width="2"/><path stroke="#4b4f56" stroke-width="4" d="M25 25l6 6"/></svg><i></i></button>
                    <button class="nav-tool" aria-label="Orbit"><svg width="34" height="34" viewBox="0 0 32 30"><g fill="none" stroke="#4b4f57" stroke-width="2"><ellipse cx="16" cy="15" rx="15" ry="5"/><ellipse cx="15" cy="15" rx="5" ry="14"/><path d="M17 6h5M20 4v5M13 15h5M24 12h5M26 10v5"/></g></svg><i></i></button>
                    <button class="nav-tool" aria-label="Look at"><svg width="34" height="34" viewBox="0 0 34 30"><path fill="#a7aab1" stroke="#4f535b" d="M1 9h32v20H1zM3 7l8-7v4l13-2v5z"/><path fill="#7a7f90" stroke="#4f535b" stroke-width="2" d="M7 14h20v10H7z"/></svg></button>
                    <button class="nav-corner" aria-label="Options"><svg width="12" height="12" viewBox="0 0 12 12"><circle cx="6" cy="6" r="6" fill="#484c54"/><path fill="#b9bcc1" d="M3 3h6v2H3zM3 6h6L6 9z"/></svg></button>
                </div>
            </div>

            <nav class="doc-tabs">
                <button class="doc-tab home">
                    <svg width="28" height="28" viewBox="0 0 28 28"><path fill="#c9cbcf" d="M20 2h4v7l-4-4zM4 15l10-10 10 10v12h-6v-9h-7v9H4z"/><path fill="none" stroke="#d6d8db" stroke-width="3" d="M1 15L14 2l13 13"/></svg>Home
                </button>
                <button class="doc-tab">Part1 <svg class="x"><use href="#i-close"/></svg></button>
                <button class="doc-tab">BasePartTest_TO.ipt <svg class="x"><use href="#i-close"/></svg></button>
                <button class="doc-tab open">TopPlate.ipt <svg class="x"><use href="#i-close"/></svg></button>
                <button class="menu" aria-label="Documents"><svg width="26" height="22"><use href="#i-menu"/></svg></button>
            </nav>
        </main>
    </div>

    <footer class="status">
        <span>Ready</span>
        <span class="count">1</span>
        <span class="count">3</span>
    </footer>
</body>
</html>
```

FILE: styles.css
```css
* {
    box-sizing: border-box;
}
body {
    margin: 0;
    height: 100vh;
    display: flex;
    flex-direction: column;
    overflow: hidden;
    background-color: #222933;
    color: #f4f5f6;
    font-family: "Segoe UI", "Noto Sans", sans-serif;
    font-size: 19px;
}
button {
    margin: 0;
    padding: 0;
    border: none;
    background: none;
    color: inherit;
    font: inherit;
    cursor: pointer;
}
svg {
    display: block;
    flex: none;
}
.sprite {
    position: absolute;
    width: 0;
    height: 0;
}
.icon {
    width: 56px;
    height: 56px;
}
.icon-small {
    width: 28px;
    height: 28px;
}
.x {
    width: 16px;
    height: 16px;
}

/* Ribbon */
.ribbon {
    position: relative;
    margin-left: 2px;
}
.camera-thumb {
    position: absolute;
    left: 8px;
    top: 0;
    width: 94px;
    height: 10px;
    border: 2px solid #4a4d50;
    border-top: none;
    border-radius: 0 0 12px 12px;
    background: linear-gradient(90deg, #8d7454, #3b3428 25%, #8f6f4a 45%, #3a3626 60%, #6e6218 80%, #574f1c);
}
.ribbon-tabs {
    display: flex;
    height: 40px;
    padding-top: 5px;
}
.tab {
    padding: 3px 17px 0;
    color: #a9adb3;
    font-size: 20px;
}
.tab.file {
    width: 79px;
    margin-right: 5px;
    background-color: #a98600;
    color: #f0ead2;
}
.tab.active {
    padding: 3px 16px 0;
    margin-left: 4px;
    background-color: #0696d7;
    color: #fff;
}
.tab-options {
    margin-left: 40px;
}
.ribbon-groups {
    display: flex;
    border: 2px solid #0696d7;
    border-right: none;
    background-color: #3b4453;
}
.group {
    border-right: 2px solid #242b36;
}
.group h2 {
    display: flex;
    justify-content: center;
    align-items: center;
    gap: 15px;
    height: 36px;
    margin: 0;
    padding-top: 10px;
    color: #a3a9b2;
    font-size: 19px;
    font-weight: normal;
}
.caret {
    border: 7px solid transparent;
    border-top-color: #a9b4c4;
    border-bottom: none;
}
.tools {
    display: flex;
    justify-content: center;
    gap: 4px;
    height: 126px;
    padding-top: 3px;
}
.tool {
    display: flex;
    flex-direction: column;
    align-items: center;
    height: 126px;
    padding-top: 7px;
    line-height: 30px;
    text-align: center;
    white-space: nowrap;
}
.tool .icon {
    margin-bottom: 7px;
}
.tool:disabled {
    color: #646b77;
}
.tool.selected {
    width: 112px;
    border: 2px solid #3289b5;
    padding-top: 5px;
    background-color: #3a586e;
}
.stack {
    margin-left: 8px;
    padding-top: 2px;
}
.stack button {
    display: flex;
    align-items: center;
    gap: 9px;
    height: 42px;
}
.group.manage,
.group.material {
    width: 95px;
}
.group.constraints {
    width: 231px;
}
.constraints .fixed {
    width: 60px;
}
.constraints .stack {
    width: 143px;
}
.group.loads {
    width: 297px;
}
.loads .force {
    width: 62px;
}
.loads .pressure {
    width: 82px;
}
.loads .stack {
    width: 121px;
}
.group.goals {
    width: 365px;
}
.goals .preserve {
    width: 84px;
}
.goals .symmetry {
    width: 100px;
}
.goals .settings {
    width: 160px;
}
.group.mesh {
    width: 165px;
}
.mesh .stack {
    width: 33px;
}
.group.run {
    width: 103px;
}
.group.export {
    width: 99px;
}
.group.report {
    width: 81px;
}
.group.exit {
    width: 97px;
    border-right: none;
}

/* Model browser */
.workspace {
    display: grid;
    grid-template-columns: 500px 1fr;
    flex: 1;
    min-height: 0;
    padding-top: 2px;
}
.browser {
    border-right: 1px solid #1d222b;
    background-color: #3b4453;
    font-family: Tahoma, "DejaVu Sans Condensed", "Noto Sans", sans-serif;
    font-size: 19px;
}
.browser-tabs {
    display: flex;
    align-items: center;
    height: 42px;
    padding-right: 9px;
    background-color: #222933;
}
.browser-tab {
    display: flex;
    align-items: center;
    justify-content: space-between;
    width: 103px;
    height: 42px;
    padding: 0 14px 0 7px;
    background-color: #3b4453;
    font-size: 18px;
}
.add {
    margin-left: 13px;
}
.search {
    margin-left: auto;
    margin-right: 17px;
}
.menu {
    color: #d3d6da;
}
.modes {
    display: flex;
    align-items: center;
    height: 56px;
    padding-left: 12px;
}
.modes a {
    color: inherit;
    font-size: 18px;
    line-height: 24px;
    text-decoration: none;
}
.modes .current {
    margin-left: 11px;
    padding-left: 11px;
    border-left: 2px solid #f4f5f6;
    color: #38abdf;
}
.current span {
    padding: 0 7px 5px 5px;
    border-bottom: 2px solid #38abdf;
}
.root {
    display: flex;
    align-items: center;
    gap: 5px;
    height: 35px;
    padding-left: 4px;
    background-color: #313845;
    color: #9a9ea5;
}
.root svg {
    opacity: 0.6;
}
.tree,
.tree ul {
    margin: 0;
    padding: 0;
    list-style: none;
}
.tree {
    padding-left: 7px;
}
.tree ul {
    padding-left: 28px;
}
.tree ul li {
    background: repeating-linear-gradient(to bottom, #8f959e 0 2px, transparent 2px 4px) 7px 0 / 2px 100% no-repeat;
}
.tree ul li:last-child {
    background-size: 2px 18px;
}
.row {
    display: flex;
    align-items: center;
    height: 35px;
    padding-top: 1px;
    white-space: nowrap;
}
.row .icon-small {
    margin-right: 5px;
}
.stub {
    display: flex;
    align-items: center;
    width: 25px;
    height: 16px;
    background: repeating-linear-gradient(to right, #8f959e 0 2px, transparent 2px 4px) 7px 9px / 14px 2px no-repeat;
}
.toggle {
    width: 16px;
    height: 16px;
    background: linear-gradient(#fff, #fff) 0 6px / 14px 4px no-repeat #3b4453;
}
.toggle.plus {
    background: linear-gradient(#c2ccd9, #c2ccd9) 0 6px / 14px 4px no-repeat, linear-gradient(#c2ccd9, #c2ccd9) 5px 1px / 4px 14px no-repeat #3b4453;
}
.row input {
    appearance: none;
    width: 22px;
    height: 22px;
    margin: 0 6px 0 3px;
    border-radius: 3px;
    background-color: #d6d7d9;
}
.row input:checked::before {
    content: "";
    display: block;
    width: 22px;
    height: 22px;
    background-color: #2f3540;
    clip-path: polygon(3px 11px, 6px 8px, 9px 12px, 16px 5px, 19px 8px, 9px 17px);
}
.row label {
    display: flex;
    align-items: center;
}

/* Document window */
.document {
    display: flex;
    flex-direction: column;
    min-width: 0;
    min-height: 0;
}
.viewport {
    position: relative;
    flex: 1;
    min-height: 0;
    background: radial-gradient(ellipse 60% 70% at 50% 60%, #3b4252, #373e4c 40%, #2e3441 75%, #262c37 110%);
}
.scene {
    width: 100%;
    height: 100%;
}
.wire {
    fill: none;
    stroke: #b6b7ba;
}
.edge {
    fill: none;
    stroke: #c6c7ca;
}
.hole {
    fill: #343b49;
}
.triad text {
    font-family: "Liberation Sans", sans-serif;
    font-size: 22px;
}
.mass {
    position: absolute;
    left: 35px;
    top: 4px;
    font-family: Tahoma, "DejaVu Sans Condensed", sans-serif;
    font-size: 25px;
    line-height: 35px;
}
.mass p {
    margin: 0;
}
.mass .reduction {
    margin-top: 5px;
}
.window-buttons {
    position: absolute;
    top: 8px;
    right: 4px;
    display: flex;
    gap: 14px;
    color: #cfdbe8;
}
.view-cube {
    position: absolute;
    top: 60px;
    right: 26px;
}
.view-cube text {
    fill: #56595f;
    font-family: "Noto Sans", sans-serif;
    font-size: 12px;
    font-weight: bold;
}
.nav-bar {
    position: absolute;
    top: 216px;
    right: 1px;
    display: flex;
    flex-direction: column;
    align-items: center;
    justify-content: space-between;
    width: 48px;
    height: 338px;
    padding: 3px 0 5px;
    border: 1px solid #868991;
    border-radius: 5px;
    background-color: #666a72;
}
.nav-corner {
    align-self: flex-end;
    margin-right: 4px;
}
.nav-tool i {
    display: block;
    width: 0;
    margin: 14px auto 4px;
    border: 3px solid transparent;
    border-top-color: #484c54;
    border-bottom: none;
}
.nav-tool.wheel {
    display: flex;
    flex-direction: column;
    align-items: center;
    width: 42px;
    padding-bottom: 4px;
    border-bottom: 1px solid #4b4f57;
}
.doc-tabs {
    display: flex;
    height: 42px;
    padding-right: 7px;
}
.doc-tab {
    display: flex;
    align-items: center;
    gap: 11px;
    padding: 4px 16px 0;
    background-color: #454f61;
    color: #c4c8cf;
}
.doc-tab .x {
    color: #8f97a5;
}
.doc-tab.home {
    gap: 6px;
    padding: 4px 12px 0 9px;
}
.doc-tab.open {
    padding: 2px 13px 0 14px;
    border-bottom: 5px solid #38abdf;
    background-color: #3b4453;
    color: #fff;
}
.doc-tabs .menu {
    margin-left: auto;
    color: #a9b4c4;
}

/* Status bar */
.status {
    display: flex;
    align-items: center;
    height: 43px;
    border-bottom: 1px solid #000;
    background-color: #2e3440;
}
.status span {
    padding: 4px 0 0 2px;
}
.status .count {
    width: 39px;
    border-left: 1px solid #d3d6da;
    padding: 3px 4px 0 0;
    text-align: center;
    line-height: 36px;
}
.status span:first-child {
    margin-right: auto;
}
```
